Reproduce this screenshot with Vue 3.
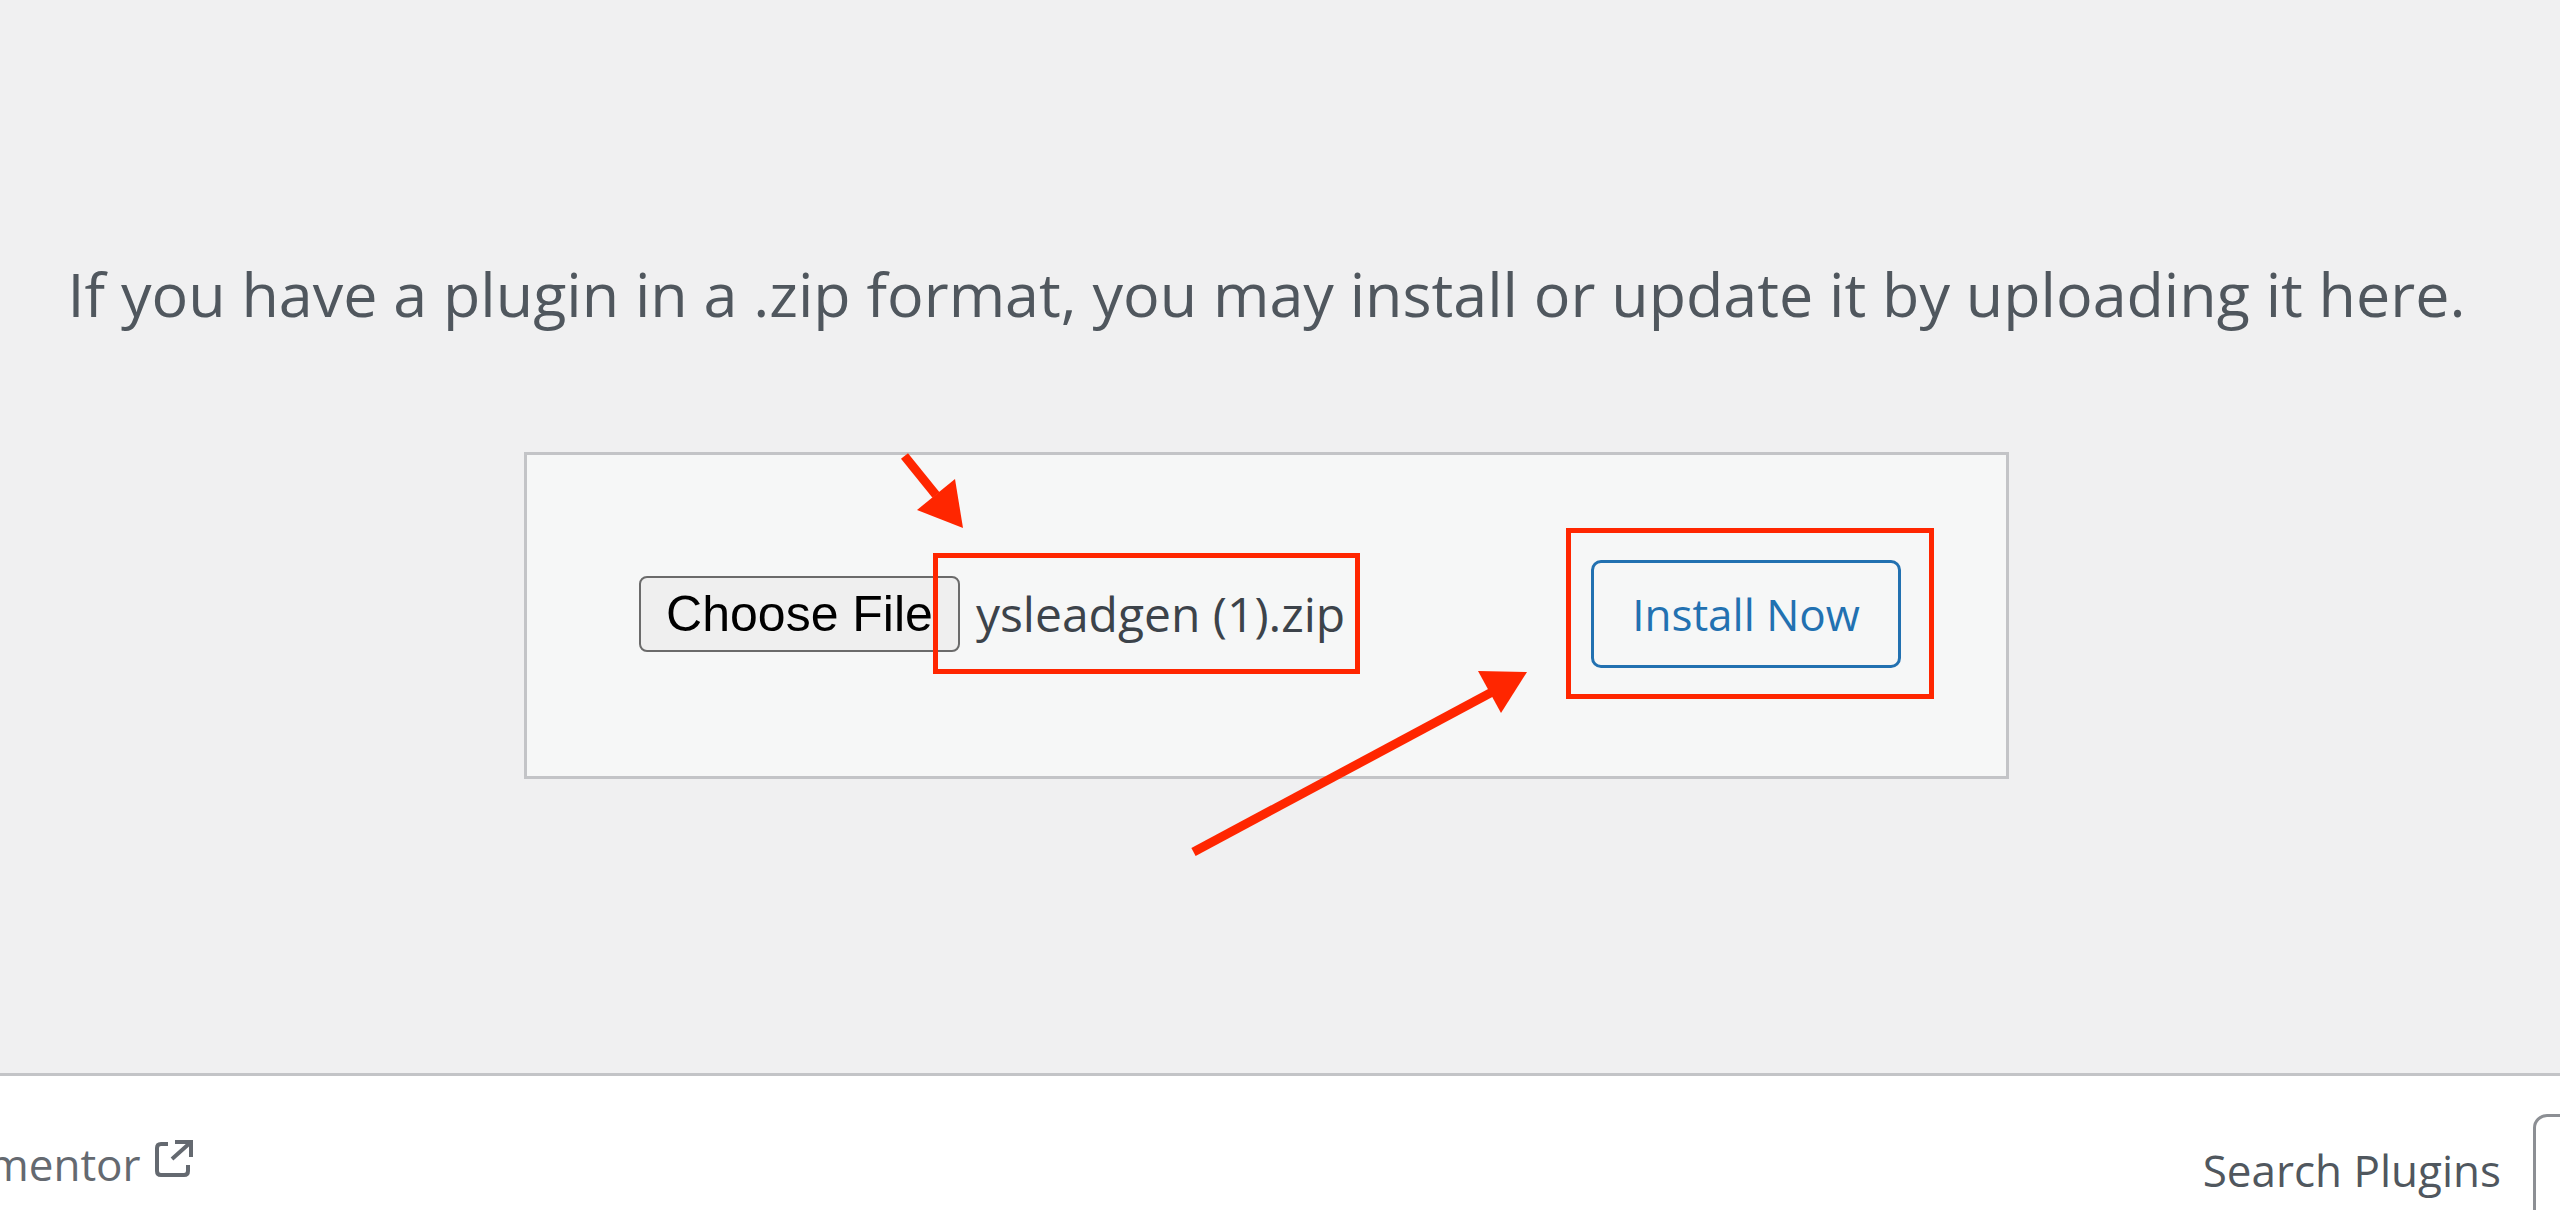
<script setup>
import { ref } from 'vue'

const picker = ref(null)
const fileName = ref('ysleadgen (1).zip')

function openPicker() {
  picker.value.click()
}

function onPick(event) {
  const file = event.target.files[0]
  if (file) fileName.value = file.name
}
</script>

<template>
  <div class="page">
    <main class="upload">
      <p class="help">If you have a plugin in a .zip format, you may install or update it by uploading it here.</p>

      <form class="card" @submit.prevent>
        <div class="chooser">
          <input ref="picker" class="native" type="file" accept=".zip" aria-label="Plugin zip file" tabindex="-1" @change="onPick" />
          <button class="choose" type="button" @click="openPicker">Choose File</button>
          <span class="marked file">{{ fileName }}</span>
        </div>

        <div class="marked action">
          <button class="install" type="submit">Install Now</button>
        </div>

        <svg class="arrow arrow-file" viewBox="0 0 70 80" aria-hidden="true">
          <path d="M7.500 6 L39 45" />
          <polygon points="58,29 66,78 20,60" />
        </svg>
        <svg class="arrow arrow-install" viewBox="0 0 340 190" aria-hidden="true">
          <path d="M3.500 182 L304 21" />
          <polygon points="288,1 337,2 311,43" />
        </svg>
      </form>
    </main>

    <footer class="filter">
      <a class="tab" href="#elementor">mentor
        <svg viewBox="0 0 38 38" aria-hidden="true">
          <path d="M13 4 H6 Q2 4 2 8 V31 Q2 35 6 35 H29 Q33 35 33 31 V25" />
          <path d="M20 2 H36 V17 M36 2 L17 19" />
        </svg>
      </a>
      <div class="search">
        <label for="plugin-search">Search Plugins</label>
        <input id="plugin-search" type="search" />
      </div>
    </footer>
  </div>
</template>

<style>
body {
  margin: 0;
  background: #f0f0f1;
}
</style>

<style scoped>
.page {
  display: flex;
  flex-direction: column;
  height: 100vh;
  overflow: hidden;
  font-family: "Segoe UI", "Open Sans", sans-serif;
  font-size: 44px;
  line-height: 60px;
  color: #3c434a;
}

.upload {
  display: flex;
  flex-direction: column;
  align-items: center;
  padding: 250px 27px 294px 0;
}

.help {
  margin: 0 0 114px;
  font-size: 61px;
  line-height: 88px;
  color: #50575e;
  white-space: nowrap;
}

.card {
  position: relative;
  box-sizing: border-box;
  display: flex;
  align-items: center;
  justify-content: space-between;
  width: 58vw;
  padding: 105px 105px 108px 112px;
  border: 3px solid #c3c4c7;
  background: #f6f7f7;
}

.chooser {
  display: flex;
  align-items: center;
  gap: 16px;
}

.native {
  position: absolute;
  width: 1px;
  height: 1px;
  opacity: 0;
}

.choose {
  padding: 6px 25px;
  border: 2px solid #6b6b6b;
  border-radius: 8px;
  background: #efefef;
  font-family: "Liberation Sans", Arial, sans-serif;
  font-size: 50px;
  line-height: 60px;
  color: #000;
}

.marked {
  position: relative;
}

.marked::after {
  content: "";
  position: absolute;
  border: 5px solid #ff2600;
  pointer-events: none;
}

.file {
  font-size: 48px;
}

.file::after {
  inset: -31px -15px -30px -43px;
}

.action::after {
  inset: -32px -33px -31px -25px;
}

.install {
  display: block;
  padding: 21px 38px;
  border: 3px solid #2271b1;
  border-radius: 10px;
  background: #f6f7f7;
  font: inherit;
  color: #2271b1;
}

.arrow {
  position: absolute;
  pointer-events: none;
}

.arrow path {
  fill: none;
  stroke: #ff2600;
  stroke-width: 9;
}

.arrow polygon {
  fill: #ff2600;
}

.arrow-file {
  left: 370px;
  top: -5px;
  width: 70px;
  height: 80px;
}

.arrow-install {
  left: 663px;
  top: 215px;
  width: 340px;
  height: 190px;
}

.filter {
  flex: 1;
  display: flex;
  align-items: flex-start;
  justify-content: space-between;
  min-height: 0;
  border-top: 3px solid #c3c4c7;
  background: #fff;
}

.tab {
  display: flex;
  gap: 14px;
  margin: 58px 0 0 -12px;
  color: #646970;
  text-decoration: none;
}

.tab svg {
  width: 38px;
  height: 38px;
  margin-top: 6px;
  fill: none;
  stroke: currentColor;
  stroke-width: 4;
}

.search {
  display: flex;
  gap: 32px;
  margin: 38px -373px 0 0;
  color: #50575e;
}

.search label {
  margin-top: 26px;
}

.search input {
  box-sizing: border-box;
  width: 400px;
  height: 112px;
  padding: 0 24px;
  border: 3px solid #8c8f94;
  border-radius: 14px;
  background: #fff;
  font: inherit;
}
</style>
